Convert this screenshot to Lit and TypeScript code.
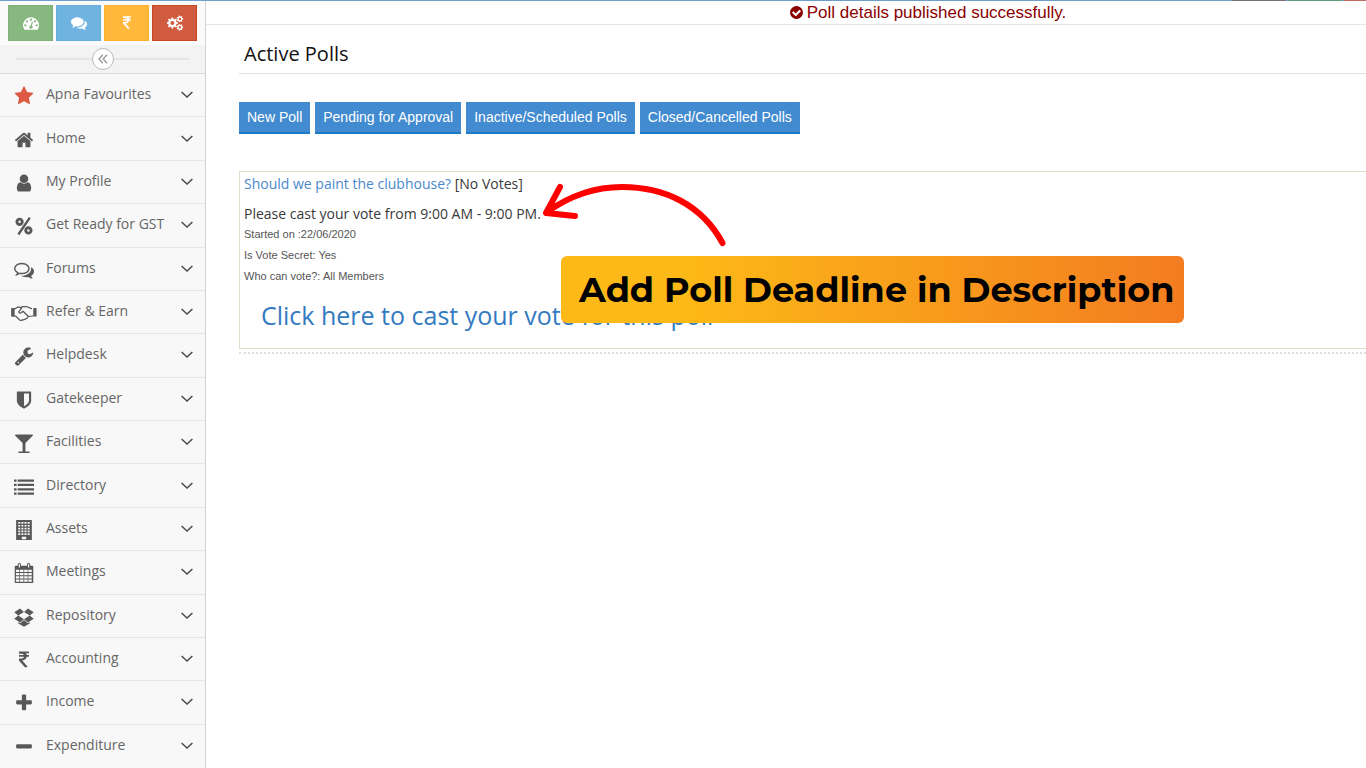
import { LitElement, html, svg, css, SVGTemplateResult } from "lit";
import { customElement } from "lit/decorators.js";

/* Polygon outline of a cog wheel with a round hole. */
const cog = (cx: number, cy: number, r: number, teeth: number): string => {
  const pts: string[] = [];
  const step = (Math.PI * 2) / teeth;
  for (let i = 0; i < teeth; i++) {
    const a = i * step;
    const at = (ang: number, rad: number) =>
      `${(cx + Math.cos(ang) * rad).toFixed(0)} ${(cy + Math.sin(ang) * rad).toFixed(0)}`;
    pts.push(at(a - step * 0.3, r * 0.76), at(a - step * 0.2, r), at(a + step * 0.2, r), at(a + step * 0.3, r * 0.76));
  }
  const h = r * 0.36;
  return `M${pts.join("L")}ZM${cx - h} ${cy}a${h} ${h} 0 1 0 ${2 * h} 0a${h} ${h} 0 1 0 ${-2 * h} 0Z`;
};

const rect = (x: number, y: number, w: number, h: number) => `M${x} ${y}h${w}v${h}h${-w}z`;

const listPath = [220, 610, 1000, 1390]
  .map((y) => rect(0, y, 230, 200) + rect(330, y, 1462, 200))
  .join("");

const buildingPath =
  rect(192, 0, 1408, 1792) +
  [190, 440, 690, 940, 1190]
    .map((y) => [380, 660, 940, 1220].map((x) => `M${x} ${y}v150h180v-150z`).join(""))
    .join("") +
  "M700 1500v220h392v-220z";

const calendarPath =
  "M128 256h1536q64 0 64 64v1400q0 72-64 72H128q-64 0-64-72V320q0-64 64-64z" +
  [600, 890, 1180, 1470]
    .map((y) => [172, 542, 912, 1282].map((x) => `M${x} ${y}v210h310v-210z`).join(""))
    .join("");

const icons: Record<string, SVGTemplateResult> = {
  star: svg`<path d="M1728 647q0 22-26 48l-363 354 86 500q1 7 1 20 0 21-10.5 35.5t-30.5 14.5q-19 0-40-12l-449-236-449 236q-22 12-40 12-21 0-31.5-14.5t-10.5-35.5q0-6 2-20l86-500-364-354q-25-27-25-48 0-37 56-46l502-73 225-455q19-41 49-41t49 41l225 455 502 73q56 9 56 46z"/>`,
  home: svg`<path d="M1472 992v480q0 26-19 45t-45 19h-384v-384h-256v384h-384q-26 0-45-19t-19-45v-480q0-1 .5-3t.5-3l575-474 575 474q1 2 1 6zm223-69l-62 74q-8 9-21 11h-3q-13 0-21-7l-692-577-692 577q-12 8-24 7-13-2-21-11l-62-74q-8-10-7-23.5t11-21.5l719-599q32-26 76-26t76 26l244 204v-195q0-14 9-23t23-9h192q14 0 23 9t9 23v408l219 182q10 8 11 21.5t-7 23.5z"/>`,
  user: svg`<path d="M1536 1399q0 109-62.5 187t-150.5 78h-854q-88 0-150.5-78t-62.5-187q0-85 8.5-160.5t31.5-152 58.5-131 94-89 134.5-34.5q131 128 313 128t313-128q76 0 134.5 34.5t94 89 58.5 131 31.5 152 8.5 160.5zm-256-887q0 159-112.5 271.5t-271.5 112.5-271.5-112.5-112.5-271.5 112.5-271.5 271.5-112.5 271.5 112.5 112.5 271.5z"/>`,
  percent: svg`<g fill="none" stroke="currentColor" stroke-width="260"><circle cx="500" cy="520" r="240"/><circle cx="1290" cy="1290" r="240"/><path d="M1420 150L390 1660" stroke-width="210"/></g>`,
  forums: svg`<path d="M704 384q-153 0-286 52t-211.5 141-78.5 191q0 82 53 158t149 132l97 56-35 84q34-20 62-39l44-31 53 10q78 14 153 14 153 0 286-52t211.5-141 78.5-191-78.5-191-211.5-141-286-52zm0-128q191 0 353.5 68.5t256.5 186.5 94 257-94 257-256.5 186.5-353.5 68.5q-86 0-176-16-124 88-278 128-36 9-86 16h-3q-11 0-20.5-8t-11.5-21q-1-3-1-6.5t.5-6.5 2-6l2.5-5 3.5-5.5 4-5 4.5-5 4-4.5q5-6 23-25t26-29.5 22.5-29 25-38.5 20.5-44q-124-72-195-177t-71-224q0-139 94-257t256.5-186.5 353.5-68.5zm822 1169q10 24 20.5 44t25 38.5 22.5 29 26 29.5 23 25q1 1 4 4.5t4.5 5 4 5 3.5 5.5l2.5 5 2 6 .5 6.5-1 6.5q-3 14-13 22t-22 7q-50-7-86-16-154-40-278-128-90 16-176 16-271 0-472-132 58 4 88 4 161 0 309-45t264-129q125-92 192-212t67-254q0-77-23-152 129 71 204 178t75 230q0 120-71 224.5t-195 176.5z"/>`,
  handshake: svg`<g transform="translate(-240 60) scale(.92)" fill="none" stroke="currentColor" stroke-width="120" stroke-linejoin="round" stroke-linecap="round"><path d="M380 480H80V1200H400L820 1590Q920 1660 1020 1600L1240 1560L1400 1480L1560 1400L1640 1250L2100 1200M400 480L640 320L900 380L1120 280L1460 280L1960 480M1020 420L720 800Q820 1000 1000 860L1140 740L1640 1220"/><path d="M60 480h200v720H60zM2200 480h200v720h-200z" fill="currentColor"/></g>`,
  wrench: svg`<path d="M448 1472q0-26-19-45t-45-19-45 19-19 45 19 45 45 19 45-19 19-45zm644-420l-682 682q-37 37-90 37-52 0-91-37l-106-108q-38-36-38-90 0-53 38-91l681-681q39 98 114.5 173.5t173.5 114.5zm634-435q0 39-23 106-47 134-164.5 217.5t-258.5 83.5q-185 0-316.5-131.5t-131.5-316.5 131.5-316.5 316.5-131.5q58 0 121.5 16.5t107.5 46.5q16 11 16 28t-16 28l-293 169v224l193 107q5-3 79-48.5t135.5-81 70.5-35.5q15 0 23.5 10t8.500 25z"/>`,
  shield: svg`<path d="M1344 960v-640h-448v1137q119-63 213-137 235-184 235-360zm192-768v768q0 86-33.5 170.5t-83 150-118 127.500-126.500 103-121 77.500-89.500 49.500-42.500 20q-12 6-26 6t-26-6q-16-7-42.500-20t-89.500-49.500-121-77.500-126.500-103-118-127.500-83-150-33.500-170.500v-768q0-26 19-45t45-19h1152q26 0 45 19t19 45z"/>`,
  glass: svg`<path d="M1699 186q0 35-43 78l-632 632v768h320q26 0 45 19t19 45-19 45-45 19h-896q-26 0-45-19t-19-45 19-45 45-19h320v-768l-632-632q-43-43-43-78 0-23 18-36.5t38-17.5 43-4h1408q23 0 43 4t38 17.5 18 36.5z"/>`,
  list: svg`<path d="${listPath}"/>`,
  building: svg`<path d="${buildingPath}" fill-rule="evenodd"/>`,
  calendar: svg`<path d="${calendarPath}" fill-rule="evenodd"/><rect x="380" y="40" width="200" height="400" rx="90" fill="#f8f8f8" stroke="currentColor" stroke-width="90"/><rect x="1210" y="40" width="200" height="400" rx="90" fill="#f8f8f8" stroke="currentColor" stroke-width="90"/>`,
  dropbox: svg`<path d="M540 130L20 470L380 760L890 440zM1250 130L900 440L1410 760L1770 470zM20 1050L380 770L890 1090L540 1380zM1770 1050L1410 770L900 1090L1250 1380zM540 1450L896 1160L1250 1450L1400 1350V1470L896 1770L390 1470V1350z"/>`,
  rupee: svg`<path d="M1345 470v102q0 14-9 23t-23 9h-168q-23 144-129 234t-276 110q167 178 459 536 14 16 4 34-8 18-29 18h-195q-16 0-25-12-306-367-498-571-9-9-9-22v-127q0-13 9.5-22.5t22.5-9.5h112q132 0 212.5-43t102.5-125h-427q-14 0-23-9t-9-23v-102q0-14 9-23t23-9h413q-57-113-268-113h-145q-13 0-22.5-9.5t-9.5-22.5v-133q0-14 9-23t23-9h832q14 0 23 9t9 23v102q0 14-9 23t-23 9h-233q47 61 64 144h171q14 0 23 9t9 23z"/>`,
  plus: svg`<path d="M1600 736v192q0 40-28 68t-68 28h-416v416q0 40-28 68t-68 28h-192q-40 0-68-28t-28-68v-416h-416q-40 0-68-28t-28-68v-192q0-40 28-68t68-28h416v-416q0-40 28-68t68-28h192q40 0 68 28t28 68v416h416q40 0 68 28t28 68z"/>`,
  minus: svg`<path d="M1600 736v192q0 40-28 68t-68 28h-1216q-40 0-68-28t-28-68v-192q0-40 28-68t68-28h1216q40 0 68 28t28 68z"/>`,
  check: svg`<path d="M1412 734q0-28-18-46l-91-90q-19-19-45-19t-45 19l-408 407-226-226q-19-19-45-19t-45 19l-91 90q-18 18-18 46 0 27 18 45l362 362q19 19 45 19 27 0 46-19l543-543q18-18 18-45zm252 162q0 209-103 385.5t-279.5 279.5-385.5 103-385.5-103-279.5-279.5-103-385.5 103-385.5 279.5-279.5 385.5-103 385.5 103 279.5 279.5 103 385.5z"/>`,
  gauge: svg`<path d="M384 1152q0-53-37.5-90.5t-90.5-37.5-90.5 37.5-37.5 90.5 37.5 90.5 90.5 37.5 90.5-37.5 37.5-90.5zm192-448q0-53-37.5-90.5t-90.5-37.5-90.5 37.5-37.5 90.5 37.5 90.5 90.5 37.5 90.5-37.5 37.5-90.5zm428 481l101-382q6-26-7.5-48.5t-38.5-29.5-48 6.5-30 39.5l-101 382q-60 5-107 43.5t-63 98.5q-20 77 20 146t117 89 146-20 89-117q16-60-6-117t-72-91zm660-33q0-53-37.5-90.5t-90.5-37.5-90.5 37.5-37.5 90.5 37.5 90.5 90.5 37.5 90.5-37.5 37.5-90.5zm-640-640q0-53-37.5-90.5t-90.5-37.5-90.5 37.5-37.5 90.5 37.5 90.5 90.5 37.5 90.5-37.5 37.5-90.5zm448 192q0-53-37.5-90.5t-90.5-37.5-90.5 37.5-37.5 90.5 37.5 90.5 90.5 37.5 90.5-37.5 37.5-90.5zm320 448q0 261-141 483-19 29-54 29h-1402q-35 0-54-29-141-221-141-483 0-182 71-348t191-286 286-191 348-71 348 71 286 191 191 286 71 348z"/>`,
  comments: svg`<path d="M1408 768q0 139-94 257t-256.5 186.5-353.5 68.5q-86 0-176-16-124 88-278 128-36 9-86 16h-3q-11 0-20.5-8t-11.5-21q-1-3-1-6.5t.5-6.5 2-6l2.5-5 3.5-5.5 4-5 4.5-5 4-4.5q5-6 23-25t26-29.5 22.5-29 25-38.5 20.5-44q-124-72-195-177t-71-224q0-139 94-257t256.5-186.5 353.5-68.5 353.5 68.5 256.5 186.5 94 257zm384 256q0 120-71 224.5t-195 176.5q10 24 20.5 44t25 38.5 22.5 29 26 29.5 23 25q1 1 4 4.5t4.5 5 4 5 3.5 5.5l2.5 5 2 6 .5 6.5-1 6.5q-3 14-13 22t-22 7q-50-7-86-16-154-40-278-128-90 16-176 16-271 0-472-132 58 4 88 4 161 0 309-45t264-129q125-92 192-212t67-254q0-77-23-152 129 71 204 178t75 230z"/>`,
  cogs: svg`<path fill-rule="evenodd" d="${cog(600, 896, 620, 8) + cog(1440, 440, 380, 7) + cog(1440, 1380, 380, 7)}"/>`,
};

const icon = (name: string) =>
  html`<svg class="icon" viewBox="0 0 1792 1792" aria-hidden="true">${icons[name]}</svg>`;

const menu: [string, string][] = [
  ["star", "Apna Favourites"],
  ["home", "Home"],
  ["user", "My Profile"],
  ["percent", "Get Ready for GST"],
  ["forums", "Forums"],
  ["handshake", "Refer & Earn"],
  ["wrench", "Helpdesk"],
  ["shield", "Gatekeeper"],
  ["glass", "Facilities"],
  ["list", "Directory"],
  ["building", "Assets"],
  ["calendar", "Meetings"],
  ["dropbox", "Repository"],
  ["rupee", "Accounting"],
  ["plus", "Income"],
  ["minus", "Expenditure"],
];

const shortcuts: [string, string, string][] = [
  ["gauge", "green", "Dashboard"],
  ["comments", "blue", "Messages"],
  ["rupee", "amber", "Payments"],
  ["cogs", "red", "Settings"],
];

@customElement("side-menu")
export class SideMenu extends LitElement {
  static styles = css`
    :host {
      display: flex;
      flex-direction: column;
      box-sizing: border-box;
      width: 206px;
      flex: none;
      background: #f8f8f8;
      border-right: 1px solid #d2d2d2;
      font-family: "Open Sans", sans-serif;
    }
    .icon {
      display: block;
      width: 20px;
      height: 20px;
      fill: currentColor;
      overflow: visible;
    }
    .shortcuts {
      display: flex;
      gap: 3px;
      padding: 4px 8px;
      background: #fafafa;
    }
    .shortcut {
      flex: 1;
      height: 36px;
      display: flex;
      align-items: center;
      justify-content: center;
      border: 1px solid;
      padding: 0;
      color: #fff;
    }
    .shortcut .icon {
      width: 16px;
      height: 16px;
    }
    .green { background: #87b87f; border-color: #80b077; }
    .blue { background: #6fb3e0; border-color: #66aede; }
    .amber { background: #ffb73c; border-color: #feb22c; }
    .red { background: #d15b3f; border-color: #c94725; }
    .collapse {
      display: flex;
      align-items: center;
      height: 28px;
      padding: 0 16px;
      background: #f3f3f3;
      border-bottom: 1px solid #dcdcdc;
    }
    .rule {
      flex: 1;
      height: 2px;
      background: #e6e6e6;
    }
    .toggle {
      width: 22px;
      height: 22px;
      padding: 0;
      border: 1px solid #bbb;
      border-radius: 50%;
      background: #fff;
      display: flex;
      align-items: center;
      justify-content: center;
      color: #999;
    }
    .list {
      flex: 1;
      display: grid;
      grid-auto-rows: 1fr;
      list-style: none;
      margin: 0;
      padding: 0;
    }
    .item {
      min-height: 42px;
      border-bottom: 1px solid #e5e5e5;
      display: flex;
    }
    .item:last-child {
      border-bottom: 0;
    }
    .link {
      flex: 1;
      display: grid;
      grid-template-columns: 20px 1fr 12px;
      column-gap: 12px;
      align-items: center;
      padding: 0 12px 0 14px;
      color: #585858;
      font-size: 14px;
      text-decoration: none;
    }
    .label {
      padding-bottom: 2px;
      line-height: 20px;
      white-space: nowrap;
      color: #666;
    }
    .glyph {
      display: flex;
      justify-content: center;
      padding-top: 2px;
    }
    .glyph.star {
      color: #dd5a43;
    }
    .arrow {
      fill: none;
      stroke: #4a4a4a;
      stroke-width: 1.5;
    }
  `;

  render() {
    return html`
      <div class="shortcuts">
        ${shortcuts.map(
          ([name, tone, title]) =>
            html`<button class="shortcut ${tone}" aria-label=${title}>${icon(name)}</button>`
        )}
      </div>
      <div class="collapse">
        <span class="rule"></span>
        <button class="toggle" aria-label="Collapse menu">
          <svg width="10" height="10" viewBox="0 0 10 10" fill="none" stroke="currentColor" stroke-width="1.3">
            <path d="M4.8 .8L1 5L4.8 9.2M9 .8L5.2 5L9 9.2" />
          </svg>
        </button>
        <span class="rule"></span>
      </div>
      <ul class="list">
        ${menu.map(
          ([name, label]) => html`<li class="item">
            <a class="link" href="#">
              <span class="glyph ${name}">${icon(name)}</span>
              <span class="label">${label}</span>
              <svg class="arrow" width="12" height="8" viewBox="0 0 12 8" aria-hidden="true">
                <path d="M.6 1L6 6L11.4 1" />
              </svg>
            </a>
          </li>`
        )}
      </ul>
    `;
  }
}

@customElement("poll-card")
export class PollCard extends LitElement {
  static styles = css`
    :host {
      display: block;
      position: relative;
      border: 1px solid #dcdfc9;
      border-right: 0;
      padding: 2px 4px 13px;
      font-family: "Open Sans", sans-serif;
      color: #393939;
    }
    .title,
    .text,
    .meta {
      margin: 0;
      font-weight: 400;
    }
    .title {
      font-size: 14px;
      line-height: 20px;
    }
    .title a {
      color: #4b88cb;
      text-decoration: none;
    }
    .text {
      margin-top: 10px;
      font-size: 14px;
      line-height: 20px;
    }
    .meta {
      font: 11px/21px "Liberation Sans", Arial, sans-serif;
      color: #555;
    }
    .vote {
      display: inline-block;
      margin: 8px 17px 0;
      font-size: 25px;
      line-height: 40px;
      color: #337ac0;
      text-decoration: none;
    }
    .callout {
      position: absolute;
      left: 321px;
      top: 84px;
      padding: 0 10px 0 18px;
      border-radius: 6px;
      background: linear-gradient(90deg, #fdb917 20%, #f37c20);
      color: #000;
      font: 700 35px/67px Montserrat, Inter, sans-serif;
      white-space: nowrap;
    }
    .pointer {
      position: absolute;
      left: 300px;
      top: 8px;
      fill: none;
      stroke: #f00;
      stroke-width: 6;
      stroke-linecap: round;
      stroke-linejoin: round;
    }
  `;

  render() {
    return html`
      <h2 class="title"><a href="#">Should we paint the clubhouse?</a> [No Votes]</h2>
      <p class="text">Please cast your vote from 9:00 AM - 9:00 PM.</p>
      <p class="meta">Started on :22/06/2020</p>
      <p class="meta">Is Vote Secret: Yes</p>
      <p class="meta">Who can vote?: All Members</p>
      <a class="vote" href="#">Click here to cast your vote for this poll</a>
      <svg class="pointer" width="190" height="72" viewBox="540 180 190 72" aria-hidden="true">
        <path d="M722.5 243C702 205 665 187 622 187C593 187 568 197 547 212M560 187L546 213L575 216" />
      </svg>
      <div class="callout">Add Poll Deadline in Description</div>
    `;
  }
}

@customElement("app-root")
export class AppRoot extends LitElement {
  static styles = css`
    :host {
      display: flex;
      flex-direction: column;
      min-height: 100vh;
      background: #fff;
      font-family: "Open Sans", sans-serif;
    }
    .strip {
      display: flex;
      justify-content: flex-end;
      gap: 2px;
      height: 1px;
      background: #6f9fcf;
    }
    .tab { width: 54px; }
    .tab.grey { background: #7a6f72; }
    .tab.green { background: #5e9e7c; }
    .tab.red { width: 22px; background: #c4675f; }
    .body {
      flex: 1;
      display: flex;
    }
    .main {
      flex: 1;
      min-width: 0;
    }
    .notice {
      display: flex;
      align-items: center;
      justify-content: center;
      gap: 3px;
      height: 23px;
      padding-left: 283px;
      border-bottom: 1px solid #e5e5e5;
      color: #8b0000;
      font: 17px/23px "Liberation Sans", Arial, sans-serif;
    }
    .notice .icon {
      width: 15px;
      height: 15px;
      fill: currentColor;
    }
    .page {
      padding-left: 33px;
    }
    .heading {
      margin: 0;
      padding: 14px 5px 4px;
      border-bottom: 1px solid #e2e2e2;
      font-size: 20px;
      line-height: 30px;
      font-weight: 400;
      color: #111;
    }
    .actions {
      display: flex;
      gap: 5px;
      margin: 28px 0 37px;
    }
    .action {
      height: 32px;
      padding: 0 8px;
      border: 0;
      border-bottom: 2px solid #1b7ac8;
      background: #428bd0;
      color: #fff;
      font: 14px "Liberation Sans", Arial, sans-serif;
    }
    .divider {
      margin: 3px 0 0;
      border: 0;
      border-top: 2px dotted #ddd;
    }
  `;

  render() {
    return html`
      <div class="strip"><span class="tab grey"></span><span class="tab green"></span><span class="tab red"></span></div>
      <div class="body">
        <side-menu></side-menu>
        <main class="main">
          <div class="notice" role="status">${icon("check")}<span>Poll details published successfully.</span></div>
          <div class="page">
            <h1 class="heading">Active Polls</h1>
            <div class="actions">
              ${["New Poll", "Pending for Approval", "Inactive/Scheduled Polls", "Closed/Cancelled Polls"].map(
                (label) => html`<button class="action">${label}</button>`
              )}
            </div>
            <poll-card></poll-card>
            <hr class="divider" />
          </div>
        </main>
      </div>
    `;
  }
}
